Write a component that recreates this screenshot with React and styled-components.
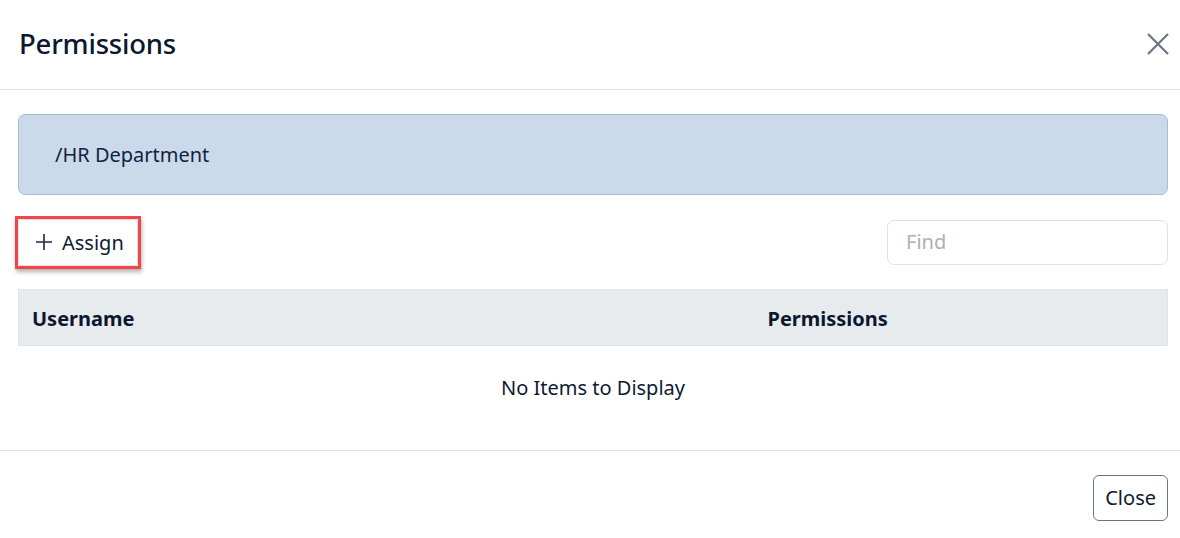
import styled, { createGlobalStyle } from "styled-components";

const GlobalStyle = createGlobalStyle`
  html, body {
    margin: 0;
    padding: 0;
    background: #ffffff;
  }
  body {
    font-family: "Noto Sans", "Open Sans", Arial, sans-serif;
    color: #0e1a33;
  }
`;

export default function App() {
  return (
    <>
      <GlobalStyle />
      <Modal>
        <Header>
          <Title>Permissions</Title>
          <CloseIcon aria-label="Close">
            <svg width="24" height="24" viewBox="0 0 24 24" fill="none">
              <path d="M2 2L22 22M22 2L2 22" stroke="#6b7384" strokeWidth="2.2" />
            </svg>
          </CloseIcon>
        </Header>
        <Body>
          <PathBox>/HR Department</PathBox>
          <Toolbar>
            <Highlight>
              <AssignButton>
                <svg width="18" height="18" viewBox="0 0 18 18" fill="none">
                  <path d="M9 1V17M1 9H17" stroke="#1d2740" strokeWidth="1.6" />
                </svg>
                Assign
              </AssignButton>
            </Highlight>
            <FindInput placeholder="Find" />
          </Toolbar>
          <Table>
            <colgroup>
              <col style={{ width: 736 }} />
              <col />
            </colgroup>
            <thead>
              <tr>
                <Th>Username</Th>
                <Th>Permissions</Th>
              </tr>
            </thead>
            <tbody>
              <tr>
                <Empty colSpan={2}>No Items to Display</Empty>
              </tr>
            </tbody>
          </Table>
        </Body>
        <Footer>
          <FooterButton>Close</FooterButton>
        </Footer>
      </Modal>
    </>
  );
}

const Modal = styled.div`
  width: 1180px;
  height: 538px;
  display: flex;
  flex-direction: column;
  background: #fff;
`;

const Header = styled.div`
  height: 90px;
  box-sizing: border-box;
  display: flex;
  align-items: center;
  justify-content: space-between;
  padding: 0 10px 2px 19px;
  border-bottom: 1px solid #dfe2e6;
`;

const Title = styled.h1`
  margin: 0;
  font-size: 27.5px;
  font-weight: 500;
  color: #0b1630;
  letter-spacing: -0.2px;
`;

const CloseIcon = styled.button`
  border: 0;
  background: none;
  padding: 0;
  width: 24px;
  height: 24px;
  display: flex;
  align-items: center;
  justify-content: center;
`;

const Body = styled.div`
  padding: 24px 12px 0 18px;
  flex: 1;
`;

const PathBox = styled.div`
  height: 81px;
  box-sizing: border-box;
  display: flex;
  align-items: center;
  padding: 0 36px 0;
  background: #cbdaea;
  border: 1px solid #a4bfdc;
  border-radius: 7px;
  font-size: 20px;
  color: #102442;
`;

const Toolbar = styled.div`
  display: flex;
  align-items: center;
  justify-content: space-between;
  margin-top: 20px;
  height: 54px;
`;

const Highlight = styled.div`
  margin-left: -3px;
  border: 3px solid #f5434a;
  box-shadow: 1px 3px 4px rgba(0, 0, 0, 0.3);
`;

const AssignButton = styled.button`
  display: flex;
  align-items: center;
  gap: 9px;
  height: 47px;
  padding: 0 13px 0 16px;
  background: #fff;
  border: 1px solid #dfe2e6;
  border-radius: 3px;
  font-family: inherit;
  font-size: 20px;
  color: #0e1a33;
`;

const FindInput = styled.input`
  width: 281px;
  height: 45px;
  box-sizing: border-box;
  border: 1px solid #dfe2e6;
  border-radius: 7px;
  padding: 0 18px 1px;
  font-family: inherit;
  font-size: 20px;
  color: #0e1a33;
  outline: none;
  &::placeholder {
    color: #a9b0ba;
  }
`;

const Table = styled.table`
  width: 1150px;
  margin-top: 20px;
  border-collapse: collapse;
  table-layout: fixed;
`;

const Th = styled.th`
  text-align: left;
  height: 56px;
  box-sizing: border-box;
  padding: 2px 13px 0;
  background: #e8ebee;
  border-top: 1px solid #dfe2e6;
  border-bottom: 1px solid #dfe2e6;
  font-size: 20px;
  font-weight: 700;
  color: #0b1630;
  &:first-child {
    border-left: 1px solid #dfe2e6;
  }
  &:last-child {
    border-right: 1px solid #dfe2e6;
  }
`;

const Empty = styled.td`
  text-align: center;
  height: 80px;
  padding-bottom: 3px;
  font-size: 20px;
  color: #0e1a33;
`;

const Footer = styled.div`
  height: 88px;
  box-sizing: border-box;
  border-top: 1px solid #dfe2e6;
  display: flex;
  align-items: flex-start;
  justify-content: flex-end;
  padding: 24px 12px 0 0;
`;

const FooterButton = styled.button`
  height: 46px;
  padding: 0 11px 2px;
  background: #fff;
  border: 1px solid #6c7484;
  border-radius: 6px;
  font-family: inherit;
  font-size: 20px;
  color: #0e1a33;
`;
